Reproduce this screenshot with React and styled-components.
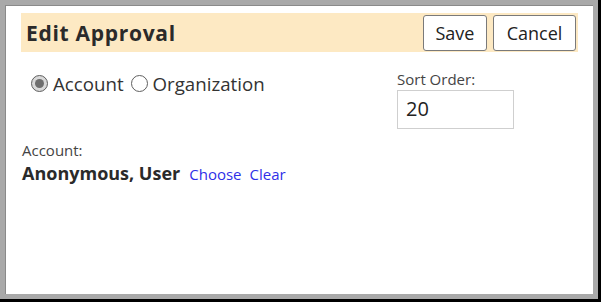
import React from 'react'
import styled, { createGlobalStyle } from 'styled-components'

const GlobalStyle = createGlobalStyle`
  html, body {
    margin: 0;
    padding: 0;
    background: #000;
  }
  body {
    font-family: "Open Sans", "Noto Sans", sans-serif;
    color: #222;
  }
`

const Dialog = styled.div`
  box-sizing: border-box;
  width: 598px;
  height: 299px;
  background: #fff;
  border: 5px solid #a9a9a9;
  box-shadow: inset 1px 1px 0 #8a8a8a;
  padding: 8px 15px 0 16px;
`

const Header = styled.div`
  display: flex;
  align-items: center;
  justify-content: space-between;
  height: 39px;
  background: #fde9c3;
  padding: 0 2px 0 5px;
`

const Title = styled.h1`
  margin: 0;
  font-size: 21px;
  font-weight: 700;
  color: #2a2a2a;
  letter-spacing: 0.7px;
`

const Buttons = styled.div`
  display: flex;
  gap: 6px;
`

const Button = styled.button`
  height: 36px;
  min-width: ${({ $w }) => $w}px;
  padding: 0 10px;
  background: #fff;
  border: 1px solid #7a7a7a;
  border-radius: 3px;
  font-family: inherit;
  font-size: 18px;
  color: #222;
`

const Row = styled.div`
  display: flex;
  align-items: flex-start;
  margin-top: 18px;
`

const Choices = styled.div`
  box-sizing: border-box;
  display: flex;
  align-items: center;
  width: 376px;
  padding: 1px 0 0 10px;
`

const Choice = styled.label`
  display: flex;
  align-items: center;
  gap: 5px;
  margin-right: 7px;
  font-size: 18.7px;
  color: #333;
`

const Radio = styled.span`
  box-sizing: border-box;
  display: inline-flex;
  align-items: center;
  justify-content: center;
  width: 17px;
  height: 17px;
  border-radius: 50%;
  border: 1px solid #5f5f5f;
  background: ${({ $checked }) => ($checked ? '#d9d9d9' : '#fff')};

  &::after {
    content: '';
    width: 9px;
    height: 9px;
    border-radius: 50%;
    background: ${({ $checked }) => ($checked ? '#6e6e6e' : 'transparent')};
  }
`

const SortField = styled.div`
  display: flex;
  flex-direction: column;
  gap: 2px;
`

const SmallLabel = styled.div`
  font-size: 15px;
  line-height: 18px;
  color: #444;
`

const Input = styled.div`
  box-sizing: border-box;
  width: 117px;
  height: 39px;
  border: 1px solid #cfcfcf;
  padding: 4px 8px;
  font-size: 20px;
  color: #222;
`

const AccountBlock = styled.div`
  margin-top: 12px;
  padding-left: 1px;
`

const AccountLine = styled.div`
  display: flex;
  align-items: baseline;
  line-height: 22px;
  margin-top: 3px;
`

const Name = styled.span`
  font-size: 18px;
  font-weight: 700;
  color: #2a2a2a;
  margin-right: 9px;
`

const Link = styled.a`
  font-size: 15px;
  color: #2f2fe8;
  text-decoration: none;
  margin-right: 8px;
`

export default function App() {
  return (
    <>
      <GlobalStyle />
      <Dialog>
        <Header>
          <Title>Edit Approval</Title>
          <Buttons>
            <Button $w={64}>Save</Button>
            <Button $w={83}>Cancel</Button>
          </Buttons>
        </Header>
        <Row>
          <Choices>
            <Choice><Radio $checked />Account</Choice>
            <Choice><Radio />Organization</Choice>
          </Choices>
          <SortField>
            <SmallLabel>Sort Order:</SmallLabel>
            <Input>20</Input>
          </SortField>
        </Row>
        <AccountBlock>
          <SmallLabel>Account:</SmallLabel>
          <AccountLine>
            <Name>Anonymous, User</Name>
            <Link href="#">Choose</Link>
            <Link href="#">Clear</Link>
          </AccountLine>
        </AccountBlock>
      </Dialog>
    </>
  )
}
